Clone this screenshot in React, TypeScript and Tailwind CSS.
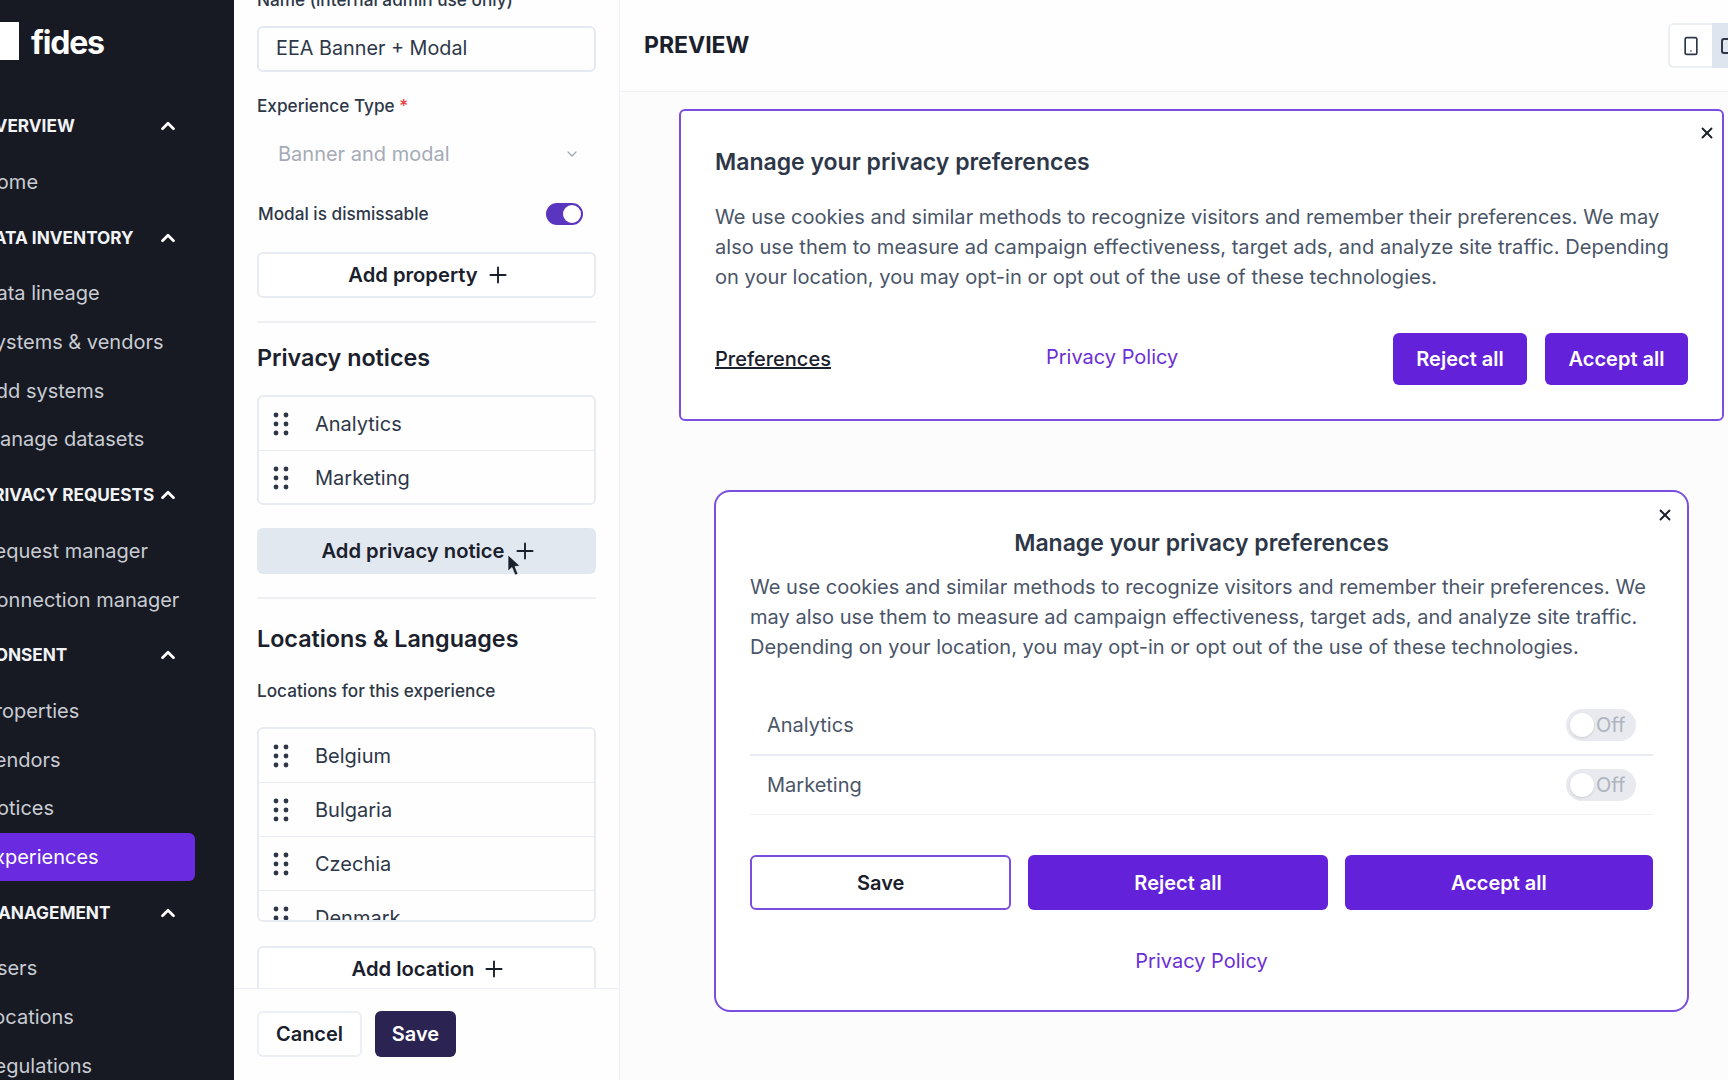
import { ChevronDown, ChevronUp, Plus, Smartphone, X } from 'lucide-react'

const navSections = [
  { title: 'OVERVIEW', items: ['Home'] },
  { title: 'DATA INVENTORY', items: ['Data lineage', 'Systems & vendors', 'Add systems', 'Manage datasets'] },
  { title: 'PRIVACY REQUESTS', items: ['Request manager', 'Connection manager'] },
  { title: 'CONSENT', items: ['Properties', 'Vendors', 'Notices', 'Experiences'] },
  { title: 'MANAGEMENT', items: ['Users', 'Locations', 'Regulations'] },
]

const bodyText =
  'We use cookies and similar methods to recognize visitors and remember their preferences. We may also use them to measure ad campaign effectiveness, target ads, and analyze site traffic. Depending on your location, you may opt-in or opt out of the use of these technologies.'

function Grip() {
  return (
    <svg width="16" height="24" viewBox="0 0 16 24" fill="#2d3748">
      <circle cx="3" cy="3" r="2.4" />
      <circle cx="13" cy="3" r="2.4" />
      <circle cx="3" cy="12" r="2.4" />
      <circle cx="13" cy="12" r="2.4" />
      <circle cx="3" cy="21" r="2.4" />
      <circle cx="13" cy="21" r="2.4" />
    </svg>
  )
}

function ListRow({ label }: { label: string }) {
  return (
    <div className="flex h-[54px] shrink-0 items-center border-b border-[#e8ebf1] pl-[14px] last:border-b-0">
      <Grip />
      <span className="ml-[26px] text-[20px] text-[#2d3748]">{label}</span>
    </div>
  )
}

function AddButton({ label, className }: { label: string; className: string }) {
  return (
    <button className={`flex h-[46px] w-full items-center justify-center gap-[7px] rounded-[6px] pl-[6px] text-[20.2px] font-semibold text-[#1a202c] ${className}`}>
      {label}
      <Plus size={26} strokeWidth={1.75} />
    </button>
  )
}

function Sidebar() {
  return (
    <aside className="h-full w-[234px] shrink-0 overflow-hidden bg-[#171a23]">
      <div className="-ml-[30px] w-[264px] pt-[22px]">
        <div className="flex h-[38px] items-center">
          <div className="h-[38px] w-[49px] bg-white" />
          <span className="ml-[12px] mt-[3px] text-[32px] font-bold tracking-[-1.2px] text-white">fides</span>
        </div>
        <nav className="mt-[42px]">
          {navSections.map((section) => (
            <div key={section.title} className="mb-[7px]">
              <div className="mb-[7px] flex h-[48.7px] items-center justify-between pl-[12px] pr-[55px]">
                <span className="whitespace-nowrap text-[17.2px] font-bold text-[#f1f3f6]">{section.title}</span>
                <ChevronUp size={22} strokeWidth={3} className="shrink-0 text-white" />
              </div>
              {section.items.map((item) => (
                <div
                  key={item}
                  className={`mr-[39px] flex h-[48.7px] items-center rounded-[6px] pl-[12px] text-[20px] ${
                    item === 'Experiences' ? 'bg-[#6a2be0] text-white' : 'text-[#c9ccd3]'
                  }`}
                >
                  {item}
                </div>
              ))}
            </div>
          ))}
        </nav>
      </div>
    </aside>
  )
}

function FormPanel() {
  return (
    <section className="flex h-full w-[386px] shrink-0 flex-col border-r border-[#edf0f5] bg-[#fefefe]">
      <div className="min-h-0 flex-1 overflow-hidden px-[23px]">
        <div className="-mt-[12px]">
          <label className="block h-[24px] text-[17.2px] font-medium leading-[24px] text-[#2d3748]">
            Name (internal admin use only) <span className="text-[#e53e3e]">*</span>
          </label>
          <div className="mt-[14px] flex h-[46px] items-center rounded-[6px] border-2 border-[#e4e8f0] pl-[17px] text-[19.8px] text-[#2d3748]">
            EEA Banner + Modal
          </div>
          <label className="mt-[22px] block h-[24px] text-[17.2px] font-medium leading-[24px] text-[#2d3748]">
            Experience Type <span className="text-[#e53e3e]">*</span>
          </label>
          <div className="mt-[13px] flex h-[45px] items-center justify-between pl-[21px] pr-[16px] text-[20px] text-[#a5abb6]">
            Banner and modal
            <ChevronDown size={16} />
          </div>
          <div className="mt-[26px] flex h-[24px] items-center justify-between pl-[1px] pr-[13px]">
            <span className="text-[17.2px] font-medium text-[#2d3748]">Modal is dismissable</span>
            <div className="flex h-[22px] w-[37px] items-center justify-end rounded-full bg-[#5a35c0] pr-[2px]">
              <div className="h-[18px] w-[18px] rounded-full bg-white" />
            </div>
          </div>
          <AddButton label="Add property" className="mt-[26px] border-2 border-[#e8ebf1] bg-white" />
          <div className="mt-[23px] border-t-2 border-[#eef0f4]" />
          <h2 className="mt-[19px] h-[32px] text-[23.3px] font-semibold leading-[32px] text-[#1a202c]">Privacy notices</h2>
          <div className="mt-[21px] h-[110px] overflow-hidden rounded-[6px] border-2 border-[#e8ebf1]">
            <ListRow label="Analytics" />
            <ListRow label="Marketing" />
          </div>
          <AddButton label="Add privacy notice" className="relative mt-[23px] bg-[#e2e8f0]" />
          <div className="mt-[23px] border-t-2 border-[#eef0f4]" />
          <h2 className="mt-[24px] h-[32px] text-[23.3px] font-semibold leading-[32px] text-[#1a202c]">Locations &amp; Languages</h2>
          <label className="mt-[24px] block h-[24px] text-[17.2px] font-medium leading-[24px] text-[#2d3748]">
            Locations for this experience
          </label>
          <div className="mt-[24px] flex h-[195px] flex-col overflow-hidden rounded-[6px] border-2 border-[#e8ebf1]">
            <ListRow label="Belgium" />
            <ListRow label="Bulgaria" />
            <ListRow label="Czechia" />
            <ListRow label="Denmark" />
          </div>
          <AddButton label="Add location" className="mt-[24px] border-2 border-[#e8ebf1] bg-white" />
        </div>
      </div>
      <footer className="flex h-[92px] shrink-0 gap-[13px] border-t border-[#edf0f5] px-[23px] pt-[22px]">
        <button className="h-[46px] w-[105px] rounded-[6px] border-2 border-[#eceff4] bg-white text-[20px] font-semibold text-[#1a202c]">
          Cancel
        </button>
        <button className="h-[46px] w-[81px] rounded-[6px] bg-[#2b2352] text-[20px] font-semibold text-white">Save</button>
      </footer>
    </section>
  )
}

function OffToggle() {
  return (
    <div className="flex h-[32px] w-[70px] items-center rounded-full bg-[#e8eaef] pl-[4px]">
      <div className="h-[24px] w-[24px] rounded-full bg-white shadow-sm" />
      <span className="ml-[2px] text-[20px] text-[#aeb3be]">Off</span>
    </div>
  )
}

function PreviewPanel() {
  return (
    <main className="relative h-full min-w-0 flex-1 overflow-hidden bg-[#fcfcfd]">
      <header className="flex h-[92px] items-center justify-between border-b border-[#eef0f4] bg-[#fefefe] pl-[24px]">
        <h1 className="text-[23px] font-bold text-[#1a202c]">PREVIEW</h1>
        <div className="flex h-[45px] items-center">
          <div className="flex h-[45px] w-[44px] items-center justify-center rounded-l-[6px] border-2 border-r-0 border-[#eceff4] bg-white">
            <Smartphone size={20} className="text-[#2d3748]" />
          </div>
          <div className="flex h-[45px] w-[16px] items-center bg-[#dfe5ee] pl-[9px]">
            <div className="h-[16px] w-[7px] rounded-l-[3px] border-2 border-r-0 border-[#2d3748]" />
          </div>
        </div>
      </header>

      <div className="relative ml-[59px] mt-[17px] h-[312px] w-[1045px] rounded-[6px] border-2 border-[#7a4fe0] bg-white px-[34px] pt-[35px]">
        <X size={18} strokeWidth={2.5} className="absolute right-[6px] top-[13px] text-[#1a202c]" />
        <h3 className="h-[32px] text-[23px] font-semibold leading-[32px] text-[#2d3748]">Manage your privacy preferences</h3>
        <p className="mt-[24px] text-[20.1px] leading-[30px] text-[#4a5568]">{bodyText}</p>
        <div className="mt-[41px] flex items-center">
          <a className="text-[20px] font-medium text-[#1a202c] underline">Preferences</a>
          <a className="-mt-[4px] ml-[215px] text-[20px] text-[#6b2fd6]">Privacy Policy</a>
          <div className="ml-auto flex gap-[18px]">
            <button className="h-[52px] w-[134px] rounded-[6px] bg-[#6322d9] text-[20px] font-semibold text-white">Reject all</button>
            <button className="h-[52px] w-[143px] rounded-[6px] bg-[#6322d9] text-[20px] font-semibold text-white">Accept all</button>
          </div>
        </div>
      </div>

      <div className="relative ml-[94px] mt-[69px] h-[522px] w-[975px] rounded-[16px] border-2 border-[#7a4fe0] bg-white px-[34px] pt-[35px]">
        <X size={18} strokeWidth={2.5} className="absolute right-[13px] top-[14px] text-[#1a202c]" />
        <h3 className="h-[32px] text-center text-[23px] font-semibold leading-[32px] text-[#2d3748]">Manage your privacy preferences</h3>
        <p className="mt-[13px] text-[20.05px] leading-[30px] text-[#4a5568]">{bodyText}</p>
        <div className="mt-[34px]">
          <div className="flex h-[60px] items-center justify-between border-b-2 border-[#e8ebf1] px-[17px]">
            <span className="text-[20px] text-[#4a5568]">Analytics</span>
            <OffToggle />
          </div>
          <div className="flex h-[59px] items-center justify-between border-b border-[#eef0f4] px-[17px]">
            <span className="text-[20px] text-[#4a5568]">Marketing</span>
            <OffToggle />
          </div>
        </div>
        <div className="mt-[40px] flex gap-[17px]">
          <button className="h-[55px] w-[262px] rounded-[6px] border-2 border-[#7a4fe0] bg-white text-[20px] font-semibold text-[#1a202c]">Save</button>
          <button className="h-[55px] w-[300px] rounded-[6px] bg-[#6322d9] text-[20px] font-semibold text-white">Reject all</button>
          <button className="h-[55px] w-[309px] rounded-[6px] bg-[#6322d9] text-[20px] font-semibold text-white">Accept all</button>
        </div>
        <div className="mt-[36px] text-center text-[20px] text-[#6b2fd6]">Privacy Policy</div>
      </div>
    </main>
  )
}

export default function App() {
  return (
    <div className="relative flex h-[1080px] w-[1728px] overflow-hidden font-['Inter',sans-serif]">
      <Sidebar />
      <FormPanel />
      <PreviewPanel />
      {/* mouse pointer from the recording */}
      <svg className="absolute left-[507px] top-[554px]" width="14" height="24" viewBox="0 0 14 24" fill="#1a202c" stroke="#ffffff" strokeWidth="0.6">
        <path d="M1 1 L1 17 L5 13.5 L8 21 L11 20 L8 12.5 L13 12 Z" />
      </svg>
    </div>
  )
}
